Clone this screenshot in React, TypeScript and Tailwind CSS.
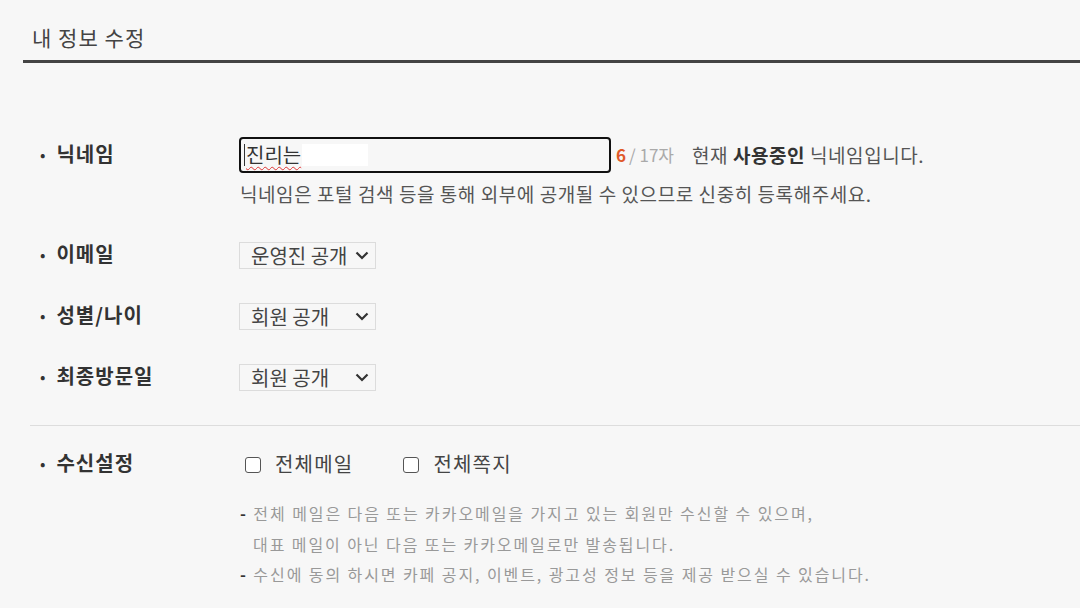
const font = { fontFamily: '"Noto Sans CJK KR", "Noto Sans", sans-serif' };

function Select({ label }: { label: string }) {
  return (
    <div className="flex h-[27px] w-[137px] items-center justify-between border border-[#dcdcdc] bg-[#f7f7f7] pl-[11px] pr-[6px] text-[20px] text-[#444]">
      <span className="leading-none">{label}</span>
      <svg width="14" height="9" viewBox="0 0 14 9" className="text-[#333]">
        <path d="M1.5 1.5 L7 7 L12.5 1.5" fill="none" stroke="currentColor" strokeWidth="2.2" />
      </svg>
    </div>
  );
}

function Label({ children }: { children: React.ReactNode }) {
  return (
    <div className="flex w-[209px] shrink-0 items-center pb-[3px] text-[20px] font-bold leading-none tracking-[0.05em] text-[#333]">
      <span className="mr-[11px] ml-[10px] text-[16px] font-normal tracking-normal">•</span>
      {children}
    </div>
  );
}

function Check({ label }: { label: string }) {
  return (
    <label className="flex items-center gap-[14px] text-[20px] leading-none tracking-[0.06em] text-[#444]">
      <span className="h-[16px] w-[16px] rounded-[3px] border border-[#555] bg-white" />
      <span className="pb-[2px]">{label}</span>
    </label>
  );
}

export default function App() {
  return (
    <div className="min-h-[608px] w-[1080px] overflow-hidden bg-[#f7f7f7]" style={font}>
      <div className="pl-[23px]">
        <h1 className="pt-[24px] pb-[10px] pl-[9px] text-[21px] leading-[26px] tracking-[0.05em] text-[#444]">내 정보 수정</h1>
        <div className="h-[3px] bg-[#444]" />
      </div>

      <div className="pl-[30px]">
        <div className="pt-[74px]">
          <div className="flex h-[36px] items-center">
            <Label>닉네임</Label>
            <div className="flex items-center">
              <div className="flex h-[36px] w-[372px] items-center rounded-[4px] border-2 border-[#111] pl-[3px]">
                <span className="h-[22px] w-px bg-[#333]" />
                <span className="ml-[1px] text-[20px] leading-none text-[#333] underline decoration-wavy decoration-[#d33] decoration-1 underline-offset-[3px]">진리는</span>
                <span className="ml-[1px] h-[22px] w-[66px] bg-white" />
              </div>
              <span className="ml-[5px] text-[17px] font-bold text-[#e0592a]">6</span>
              <span className="ml-[3px] text-[17px] text-[#aaa]">/ 17자</span>
              <span className="ml-[18px] text-[19px] tracking-[0.03em] text-[#555]">
                현재 <b className="text-[#333]">사용중인</b> 닉네임입니다.
              </span>
            </div>
          </div>
          <p className="mt-[9px] pl-[210px] text-[19px] leading-[24px] tracking-[0.03em] text-[#555]">
            닉네임은 포털 검색 등을 통해 외부에 공개될 수 있으므로 신중히 등록해주세요.
          </p>
        </div>

        <div className="mt-[36px] flex flex-col gap-[34px]">
          <div className="flex h-[27px] items-center">
            <Label>이메일</Label>
            <Select label="운영진 공개" />
          </div>
          <div className="flex h-[27px] items-center">
            <Label>성별/나이</Label>
            <Select label="회원 공개" />
          </div>
          <div className="flex h-[27px] items-center">
            <Label>최종방문일</Label>
            <Select label="회원 공개" />
          </div>
        </div>

        <div className="mt-[34px] h-px bg-[#dddddd]" />

        <div className="mt-[25px] flex h-[27px] items-center">
          <Label>수신설정</Label>
          <div className="flex items-center gap-[50px] pl-[6px]">
            <Check label="전체메일" />
            <Check label="전체쪽지" />
          </div>
        </div>

        <div className="mt-[20px] pl-[210px] text-[16px] leading-[30.5px] tracking-[0.12em] text-[#999]">
          <p>
            <b className="text-[#333]">-</b> 전체 메일은 다음 또는 카카오메일을 가지고 있는 회원만 수신할 수 있으며,
          </p>
          <p className="pl-[13px]">대표 메일이 아닌 다음 또는 카카오메일로만 발송됩니다.</p>
          <p>
            <b className="text-[#333]">-</b> 수신에 동의 하시면 카페 공지, 이벤트, 광고성 정보 등을 제공 받으실 수 있습니다.
          </p>
        </div>
      </div>
    </div>
  );
}
